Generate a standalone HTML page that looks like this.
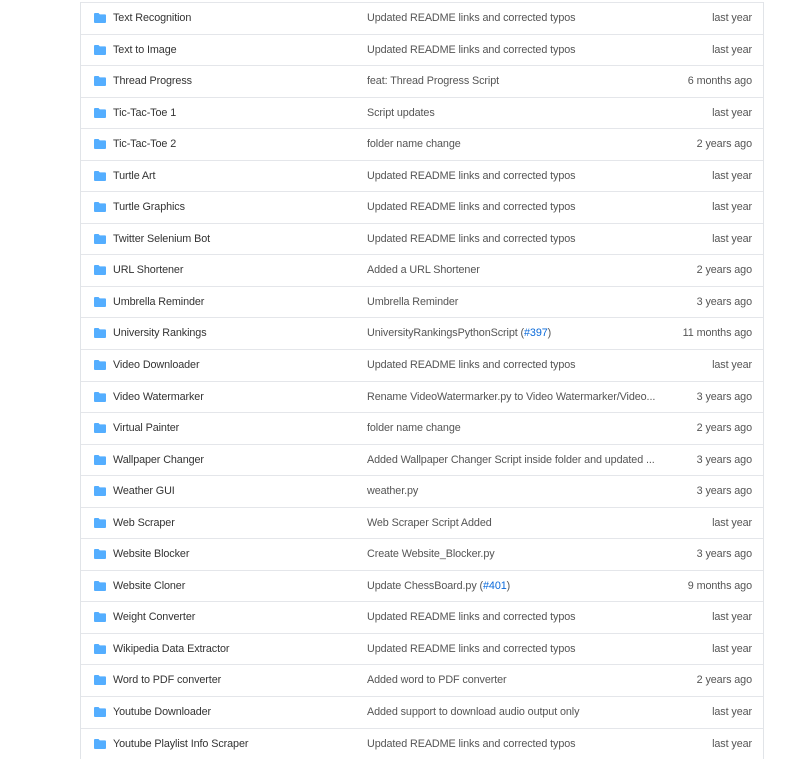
<!DOCTYPE html>
<html><head><meta charset="utf-8"><style>
body{margin:0;background:#fff;width:800px;height:743px;overflow:hidden;font-family:"Liberation Sans",sans-serif;font-size:10.8px;letter-spacing:-0.1px;color:#333}
.t{position:absolute;left:80px;top:2px;width:682px;border-left:1px solid #e1e4e8;border-right:1px solid #e1e4e8}
.r{position:relative;height:30.55px;border-top:1px solid #e4e6ea}
.r svg{position:absolute;left:13px;top:10px}
.n{position:absolute;left:32px;top:9px}
.c{position:absolute;left:286px;top:9px;color:#555}
.d{position:absolute;right:11px;top:9px;color:#555}
a{color:#0969da;text-decoration:none}
</style></head><body><div class="t">
<div class="r"><svg width="12" height="10" viewBox="0 0 12 10"><path d="M0 1Q0 0 1 0H4.5L5.8 1.4H11Q12 1.4 12 2.4V9Q12 10 11 10H1Q0 10 0 9Z" fill="#54aeff"/></svg><span class="n">Text Recognition</span><span class="c">Updated README links and corrected typos</span><span class="d">last year</span></div>
<div class="r"><svg width="12" height="10" viewBox="0 0 12 10"><path d="M0 1Q0 0 1 0H4.5L5.8 1.4H11Q12 1.4 12 2.4V9Q12 10 11 10H1Q0 10 0 9Z" fill="#54aeff"/></svg><span class="n">Text to Image</span><span class="c">Updated README links and corrected typos</span><span class="d">last year</span></div>
<div class="r"><svg width="12" height="10" viewBox="0 0 12 10"><path d="M0 1Q0 0 1 0H4.5L5.8 1.4H11Q12 1.4 12 2.4V9Q12 10 11 10H1Q0 10 0 9Z" fill="#54aeff"/></svg><span class="n">Thread Progress</span><span class="c">feat: Thread Progress Script</span><span class="d">6 months ago</span></div>
<div class="r"><svg width="12" height="10" viewBox="0 0 12 10"><path d="M0 1Q0 0 1 0H4.5L5.8 1.4H11Q12 1.4 12 2.4V9Q12 10 11 10H1Q0 10 0 9Z" fill="#54aeff"/></svg><span class="n">Tic-Tac-Toe 1</span><span class="c">Script updates</span><span class="d">last year</span></div>
<div class="r"><svg width="12" height="10" viewBox="0 0 12 10"><path d="M0 1Q0 0 1 0H4.5L5.8 1.4H11Q12 1.4 12 2.4V9Q12 10 11 10H1Q0 10 0 9Z" fill="#54aeff"/></svg><span class="n">Tic-Tac-Toe 2</span><span class="c">folder name change</span><span class="d">2 years ago</span></div>
<div class="r"><svg width="12" height="10" viewBox="0 0 12 10"><path d="M0 1Q0 0 1 0H4.5L5.8 1.4H11Q12 1.4 12 2.4V9Q12 10 11 10H1Q0 10 0 9Z" fill="#54aeff"/></svg><span class="n">Turtle Art</span><span class="c">Updated README links and corrected typos</span><span class="d">last year</span></div>
<div class="r"><svg width="12" height="10" viewBox="0 0 12 10"><path d="M0 1Q0 0 1 0H4.5L5.8 1.4H11Q12 1.4 12 2.4V9Q12 10 11 10H1Q0 10 0 9Z" fill="#54aeff"/></svg><span class="n">Turtle Graphics</span><span class="c">Updated README links and corrected typos</span><span class="d">last year</span></div>
<div class="r"><svg width="12" height="10" viewBox="0 0 12 10"><path d="M0 1Q0 0 1 0H4.5L5.8 1.4H11Q12 1.4 12 2.4V9Q12 10 11 10H1Q0 10 0 9Z" fill="#54aeff"/></svg><span class="n">Twitter Selenium Bot</span><span class="c">Updated README links and corrected typos</span><span class="d">last year</span></div>
<div class="r"><svg width="12" height="10" viewBox="0 0 12 10"><path d="M0 1Q0 0 1 0H4.5L5.8 1.4H11Q12 1.4 12 2.4V9Q12 10 11 10H1Q0 10 0 9Z" fill="#54aeff"/></svg><span class="n">URL Shortener</span><span class="c">Added a URL Shortener</span><span class="d">2 years ago</span></div>
<div class="r"><svg width="12" height="10" viewBox="0 0 12 10"><path d="M0 1Q0 0 1 0H4.5L5.8 1.4H11Q12 1.4 12 2.4V9Q12 10 11 10H1Q0 10 0 9Z" fill="#54aeff"/></svg><span class="n">Umbrella Reminder</span><span class="c">Umbrella Reminder</span><span class="d">3 years ago</span></div>
<div class="r"><svg width="12" height="10" viewBox="0 0 12 10"><path d="M0 1Q0 0 1 0H4.5L5.8 1.4H11Q12 1.4 12 2.4V9Q12 10 11 10H1Q0 10 0 9Z" fill="#54aeff"/></svg><span class="n">University Rankings</span><span class="c">UniversityRankingsPythonScript (<a>#397</a>)</span><span class="d">11 months ago</span></div>
<div class="r"><svg width="12" height="10" viewBox="0 0 12 10"><path d="M0 1Q0 0 1 0H4.5L5.8 1.4H11Q12 1.4 12 2.4V9Q12 10 11 10H1Q0 10 0 9Z" fill="#54aeff"/></svg><span class="n">Video Downloader</span><span class="c">Updated README links and corrected typos</span><span class="d">last year</span></div>
<div class="r"><svg width="12" height="10" viewBox="0 0 12 10"><path d="M0 1Q0 0 1 0H4.5L5.8 1.4H11Q12 1.4 12 2.4V9Q12 10 11 10H1Q0 10 0 9Z" fill="#54aeff"/></svg><span class="n">Video Watermarker</span><span class="c">Rename VideoWatermarker.py to Video Watermarker/Video...</span><span class="d">3 years ago</span></div>
<div class="r"><svg width="12" height="10" viewBox="0 0 12 10"><path d="M0 1Q0 0 1 0H4.5L5.8 1.4H11Q12 1.4 12 2.4V9Q12 10 11 10H1Q0 10 0 9Z" fill="#54aeff"/></svg><span class="n">Virtual Painter</span><span class="c">folder name change</span><span class="d">2 years ago</span></div>
<div class="r"><svg width="12" height="10" viewBox="0 0 12 10"><path d="M0 1Q0 0 1 0H4.5L5.8 1.4H11Q12 1.4 12 2.4V9Q12 10 11 10H1Q0 10 0 9Z" fill="#54aeff"/></svg><span class="n">Wallpaper Changer</span><span class="c">Added Wallpaper Changer Script inside folder and updated ...</span><span class="d">3 years ago</span></div>
<div class="r"><svg width="12" height="10" viewBox="0 0 12 10"><path d="M0 1Q0 0 1 0H4.5L5.8 1.4H11Q12 1.4 12 2.4V9Q12 10 11 10H1Q0 10 0 9Z" fill="#54aeff"/></svg><span class="n">Weather GUI</span><span class="c">weather.py</span><span class="d">3 years ago</span></div>
<div class="r"><svg width="12" height="10" viewBox="0 0 12 10"><path d="M0 1Q0 0 1 0H4.5L5.8 1.4H11Q12 1.4 12 2.4V9Q12 10 11 10H1Q0 10 0 9Z" fill="#54aeff"/></svg><span class="n">Web Scraper</span><span class="c">Web Scraper Script Added</span><span class="d">last year</span></div>
<div class="r"><svg width="12" height="10" viewBox="0 0 12 10"><path d="M0 1Q0 0 1 0H4.5L5.8 1.4H11Q12 1.4 12 2.4V9Q12 10 11 10H1Q0 10 0 9Z" fill="#54aeff"/></svg><span class="n">Website Blocker</span><span class="c">Create Website_Blocker.py</span><span class="d">3 years ago</span></div>
<div class="r"><svg width="12" height="10" viewBox="0 0 12 10"><path d="M0 1Q0 0 1 0H4.5L5.8 1.4H11Q12 1.4 12 2.4V9Q12 10 11 10H1Q0 10 0 9Z" fill="#54aeff"/></svg><span class="n">Website Cloner</span><span class="c">Update ChessBoard.py (<a>#401</a>)</span><span class="d">9 months ago</span></div>
<div class="r"><svg width="12" height="10" viewBox="0 0 12 10"><path d="M0 1Q0 0 1 0H4.5L5.8 1.4H11Q12 1.4 12 2.4V9Q12 10 11 10H1Q0 10 0 9Z" fill="#54aeff"/></svg><span class="n">Weight Converter</span><span class="c">Updated README links and corrected typos</span><span class="d">last year</span></div>
<div class="r"><svg width="12" height="10" viewBox="0 0 12 10"><path d="M0 1Q0 0 1 0H4.5L5.8 1.4H11Q12 1.4 12 2.4V9Q12 10 11 10H1Q0 10 0 9Z" fill="#54aeff"/></svg><span class="n">Wikipedia Data Extractor</span><span class="c">Updated README links and corrected typos</span><span class="d">last year</span></div>
<div class="r"><svg width="12" height="10" viewBox="0 0 12 10"><path d="M0 1Q0 0 1 0H4.5L5.8 1.4H11Q12 1.4 12 2.4V9Q12 10 11 10H1Q0 10 0 9Z" fill="#54aeff"/></svg><span class="n">Word to PDF converter</span><span class="c">Added word to PDF converter</span><span class="d">2 years ago</span></div>
<div class="r"><svg width="12" height="10" viewBox="0 0 12 10"><path d="M0 1Q0 0 1 0H4.5L5.8 1.4H11Q12 1.4 12 2.4V9Q12 10 11 10H1Q0 10 0 9Z" fill="#54aeff"/></svg><span class="n">Youtube Downloader</span><span class="c">Added support to download audio output only</span><span class="d">last year</span></div>
<div class="r"><svg width="12" height="10" viewBox="0 0 12 10"><path d="M0 1Q0 0 1 0H4.5L5.8 1.4H11Q12 1.4 12 2.4V9Q12 10 11 10H1Q0 10 0 9Z" fill="#54aeff"/></svg><span class="n">Youtube Playlist Info Scraper</span><span class="c">Updated README links and corrected typos</span><span class="d">last year</span></div>
</div></body></html>
